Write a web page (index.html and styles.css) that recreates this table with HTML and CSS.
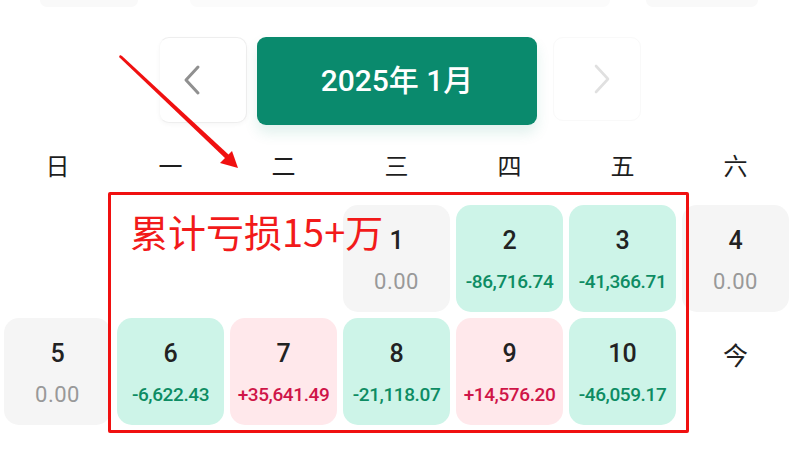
FILE: index.html
```html
<!DOCTYPE html>
<html lang="zh">
<head>
<meta charset="utf-8">
<link rel="stylesheet" href="styles.css">
</head>
<body>
<div class="page">
  <div class="topstrip">
    <span class="ghost g1"></span>
    <span class="ghost g2"></span>
    <span class="ghost g3"></span>
  </div>
  <div class="header">
    <div class="navbtn prev">
      <svg width="22" height="32" viewBox="0 0 22 32"><path d="M17 3 L5 16 L17 29" fill="none" stroke="#909090" stroke-width="3" stroke-linecap="round" stroke-linejoin="round"/></svg>
    </div>
    <div class="month">2025年 1月</div>
    <div class="navbtn next">
      <svg width="22" height="32" viewBox="0 0 22 32"><path d="M5 3 L17 16 L5 29" fill="none" stroke="#e0e0e0" stroke-width="2.6" stroke-linecap="round" stroke-linejoin="round"/></svg>
    </div>
  </div>
  <div class="weekdays">
    <span>日</span><span>一</span><span>二</span><span>三</span><span>四</span><span>五</span><span>六</span>
  </div>
  <div class="grid">
    <div class="cell empty"></div>
    <div class="cell empty"></div>
    <div class="cell empty"></div>
    <div class="cell zero"><span class="num">1</span><span class="val">0.00</span></div>
    <div class="cell loss"><span class="num">2</span><span class="val">-86,716.74</span></div>
    <div class="cell loss"><span class="num">3</span><span class="val">-41,366.71</span></div>
    <div class="cell zero"><span class="num">4</span><span class="val">0.00</span></div>
    <div class="cell zero"><span class="num">5</span><span class="val">0.00</span></div>
    <div class="cell loss"><span class="num">6</span><span class="val">-6,622.43</span></div>
    <div class="cell gain"><span class="num">7</span><span class="val">+35,641.49</span></div>
    <div class="cell loss"><span class="num">8</span><span class="val">-21,118.07</span></div>
    <div class="cell gain"><span class="num">9</span><span class="val">+14,576.20</span></div>
    <div class="cell loss"><span class="num">10</span><span class="val">-46,059.17</span></div>
    <div class="cell today"><span class="num">今</span><span class="val">&nbsp;</span></div>
  </div>

  <div class="annot-box">
    <span class="annot-text">累计亏损15+万</span>
  </div>
  <svg class="arrow" width="800" height="457" viewBox="0 0 800 457">
    <polygon points="120,55 122,56 229,155 226,159 119,57" fill="#f01010"/>
    <polygon points="238,168 220,163 232,151" fill="#f01010"/>
  </svg>
</div>
</body>
</html>
```
FILE: styles.css
```css
* { box-sizing: border-box; }
html, body {
  margin: 0;
  padding: 0;
  background: #ffffff;
  width: 800px;
  height: 457px;
  overflow: hidden;
}
.page {
  position: relative;
  width: 800px;
  height: 457px;
  font-family: Roboto, "Noto Sans", "Noto Sans CJK SC", sans-serif;
  color: #222;
}
.topstrip {
  height: 10px;
  display: flex;
}
.ghost {
  display: block;
  height: 7px;
  background: #f9f9f9;
  border-radius: 0 0 10px 10px;
}
.g1 { margin-left: 40px; width: 98px; }
.g2 { margin-left: 52px; width: 420px; background: #fbfbfb; }
.g3 { margin-left: 36px; width: 112px; }

.header {
  margin-top: 27px;
  display: flex;
  justify-content: center;
  gap: 10px;
  height: 88px;
  padding-right: 6px;
}
.navbtn {
  width: 88px;
  height: 86px;
  display: flex;
  align-items: center;
  justify-content: center;
  border-radius: 10px;
  background: #fff;
}
.prev {
  border: 1px solid #eeeeee;
  border-left-color: #f9f9f9;
  box-shadow: 0 2px 4px rgba(0,0,0,0.03);
  padding-right: 22px;
  margin-left: 6px;
}
.next {
  border: 1px solid #f9f9f9;
  margin-left: 6px;
  padding-left: 10px;
  height: 84px;
}
.month {
  width: 280px;
  height: 88px;
  padding-bottom: 7px;
  background: #0a8a6d;
  color: #fff;
  border-radius: 9px;
  display: flex;
  align-items: center;
  justify-content: center;
  font-size: 30px;
  font-weight: 500;
  box-shadow: 0 8px 14px rgba(10,138,109,0.12);
}

.weekdays {
  margin-top: 20px;
  display: grid;
  grid-template-columns: repeat(7, 107px);
  column-gap: 6px;
  padding-left: 4px;
  height: 40px;
  align-items: center;
}
.weekdays span {
  text-align: center;
  font-family: "Noto Sans CJK SC", sans-serif;
  font-size: 24px;
  line-height: 40px;
  color: #1e1e1e;
}

.grid {
  margin-top: 20px;
  display: grid;
  grid-template-columns: repeat(7, 107px);
  grid-auto-rows: 107px;
  gap: 6px;
  padding-left: 4px;
}
.cell {
  border-radius: 15px;
  display: flex;
  flex-direction: column;
  align-items: center;
  justify-content: flex-start;
  padding-top: 20px;
}
.cell.empty { background: transparent; }
.cell.zero { background: #f5f5f5; }
.cell.loss { background: #cdf4e8; }
.cell.gain { background: #ffe8eb; }
.num {
  font-size: 25px;
  font-weight: 500;
  line-height: 32px;
  color: #222;
}
.val {
  margin-top: 13px;
  font-size: 19px;
  font-weight: 500;
  line-height: 24px;
  letter-spacing: -0.4px;
}
.zero .val { color: #999999; font-size: 22px; font-weight: 400; letter-spacing: 0.5px; }
.loss .val { color: #0d8c63; }
.gain .val { color: #cf1548; }
.today .num {
  font-family: "Noto Sans CJK SC", sans-serif;
  font-weight: 400;
  font-size: 25px;
}

.annot-box {
  position: absolute;
  left: 108px;
  top: 192px;
  width: 581px;
  height: 241px;
  border: 3px solid #f01010;
  border-radius: 2px;
}
.annot-text {
  position: absolute;
  left: 19px;
  top: 11px;
  font-family: "Noto Sans CJK SC", sans-serif;
  font-size: 38px;
  font-weight: 400;
  line-height: 50px;
  color: #f21a1a;
  white-space: nowrap;
}
.arrow {
  position: absolute;
  left: 0;
  top: 0;
  pointer-events: none;
}
```
